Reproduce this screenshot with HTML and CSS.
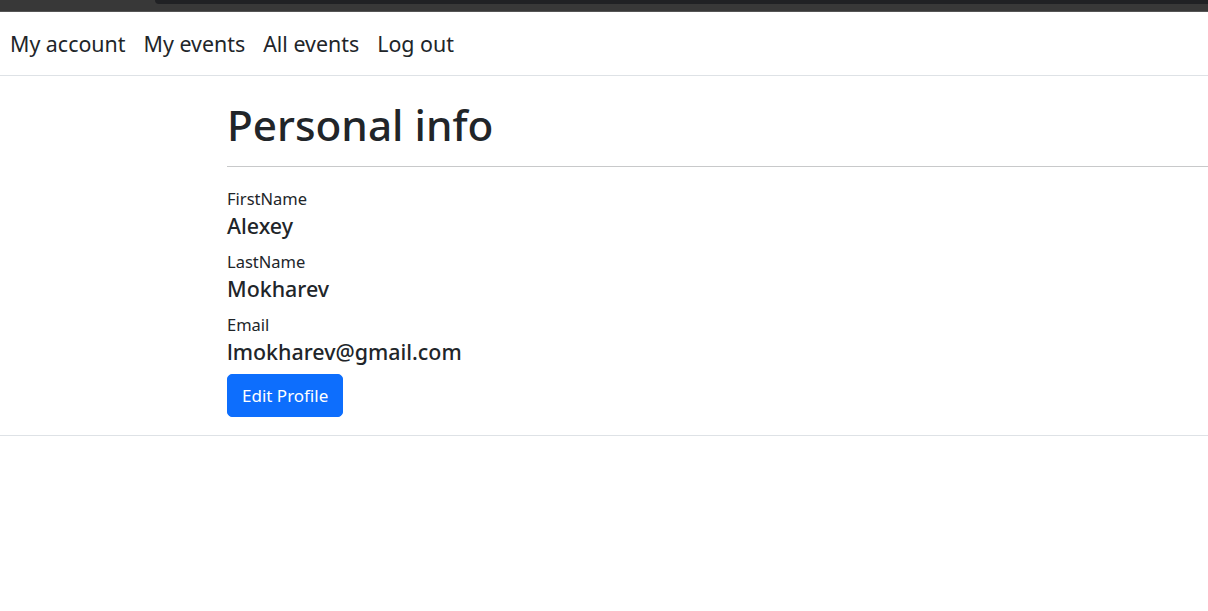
FILE: index.html
```html
<!DOCTYPE html>
<html lang="en">
<head>
<meta charset="utf-8">
<title>Personal info</title>
<link rel="stylesheet" href="styles.css">
</head>
<body>
<div class="chrome"><div class="chrome-tab"></div></div>
<header class="topnav">
  <nav class="nav">
    <a class="nav-link" href="#">My account</a>
    <a class="nav-link" href="#">My events</a>
    <a class="nav-link" href="#">All events</a>
    <a class="nav-link" href="#">Log out</a>
  </nav>
</header>
<main class="page">
  <h1 class="title">Personal info</h1>
  <hr class="divider">
  <dl class="info">
    <div class="field">
      <dt class="label">FirstName</dt>
      <dd class="value">Alexey</dd>
    </div>
    <div class="field">
      <dt class="label">LastName</dt>
      <dd class="value">Mokharev</dd>
    </div>
    <div class="field">
      <dt class="label">Email</dt>
      <dd class="value">lmokharev@gmail.com</dd>
    </div>
  </dl>
  <button class="btn-primary" type="button">Edit Profile</button>
</main>
<div class="footer-line"></div>
</body>
</html>
```
FILE: styles.css
```css
* { box-sizing: border-box; }
html, body { margin: 0; padding: 0; background: #fff; }
body {
  font-family: "Noto Sans", "Open Sans", Arial, sans-serif;
  color: #212529;
}
.chrome {
  height: 12px;
  background: #383838;
  border-bottom: 1px solid #555;
  display: flex;
}
.chrome-tab {
  margin-left: 155px;
  flex: 1;
  height: 4px;
  background: #202124;
  border-bottom-left-radius: 8px;
}
.topnav {
  height: 64px;
  border-bottom: 1px solid #dee2e6;
  display: flex;
  align-items: center;
}
.nav {
  display: flex;
  gap: 18px;
  padding-left: 10px;
}
.nav-link {
  font-size: 21.4px;
  color: #212529;
  text-decoration: none;
}
.page {
  padding-left: 227px;
  padding-top: 24px;
  padding-bottom: 18px;
}
.title {
  margin: 0;
  font-size: 42.3px;
  font-weight: 500;
  line-height: 50px;
}
.divider {
  margin: 16px 0 20px;
  border: 0;
  border-top: 1px solid #c8c9ca;
}
.info { margin: 0; }
.field { margin-bottom: 9px; }
.field:last-child { margin-bottom: 7px; }
.label {
  font-size: 16.5px;
  line-height: 24px;
}
.value {
  margin: 0;
  font-size: 21.4px;
  font-weight: 500;
  line-height: 30px;
}
.btn-primary {
  font-family: inherit;
  font-size: 17px;
  color: #fff;
  background: #0d6efd;
  border: 1px solid #0d6efd;
  border-radius: 5px;
  height: 43px;
  padding: 0 14px;
}
.footer-line {
  border-top: 1px solid #dee2e6;
}
```
